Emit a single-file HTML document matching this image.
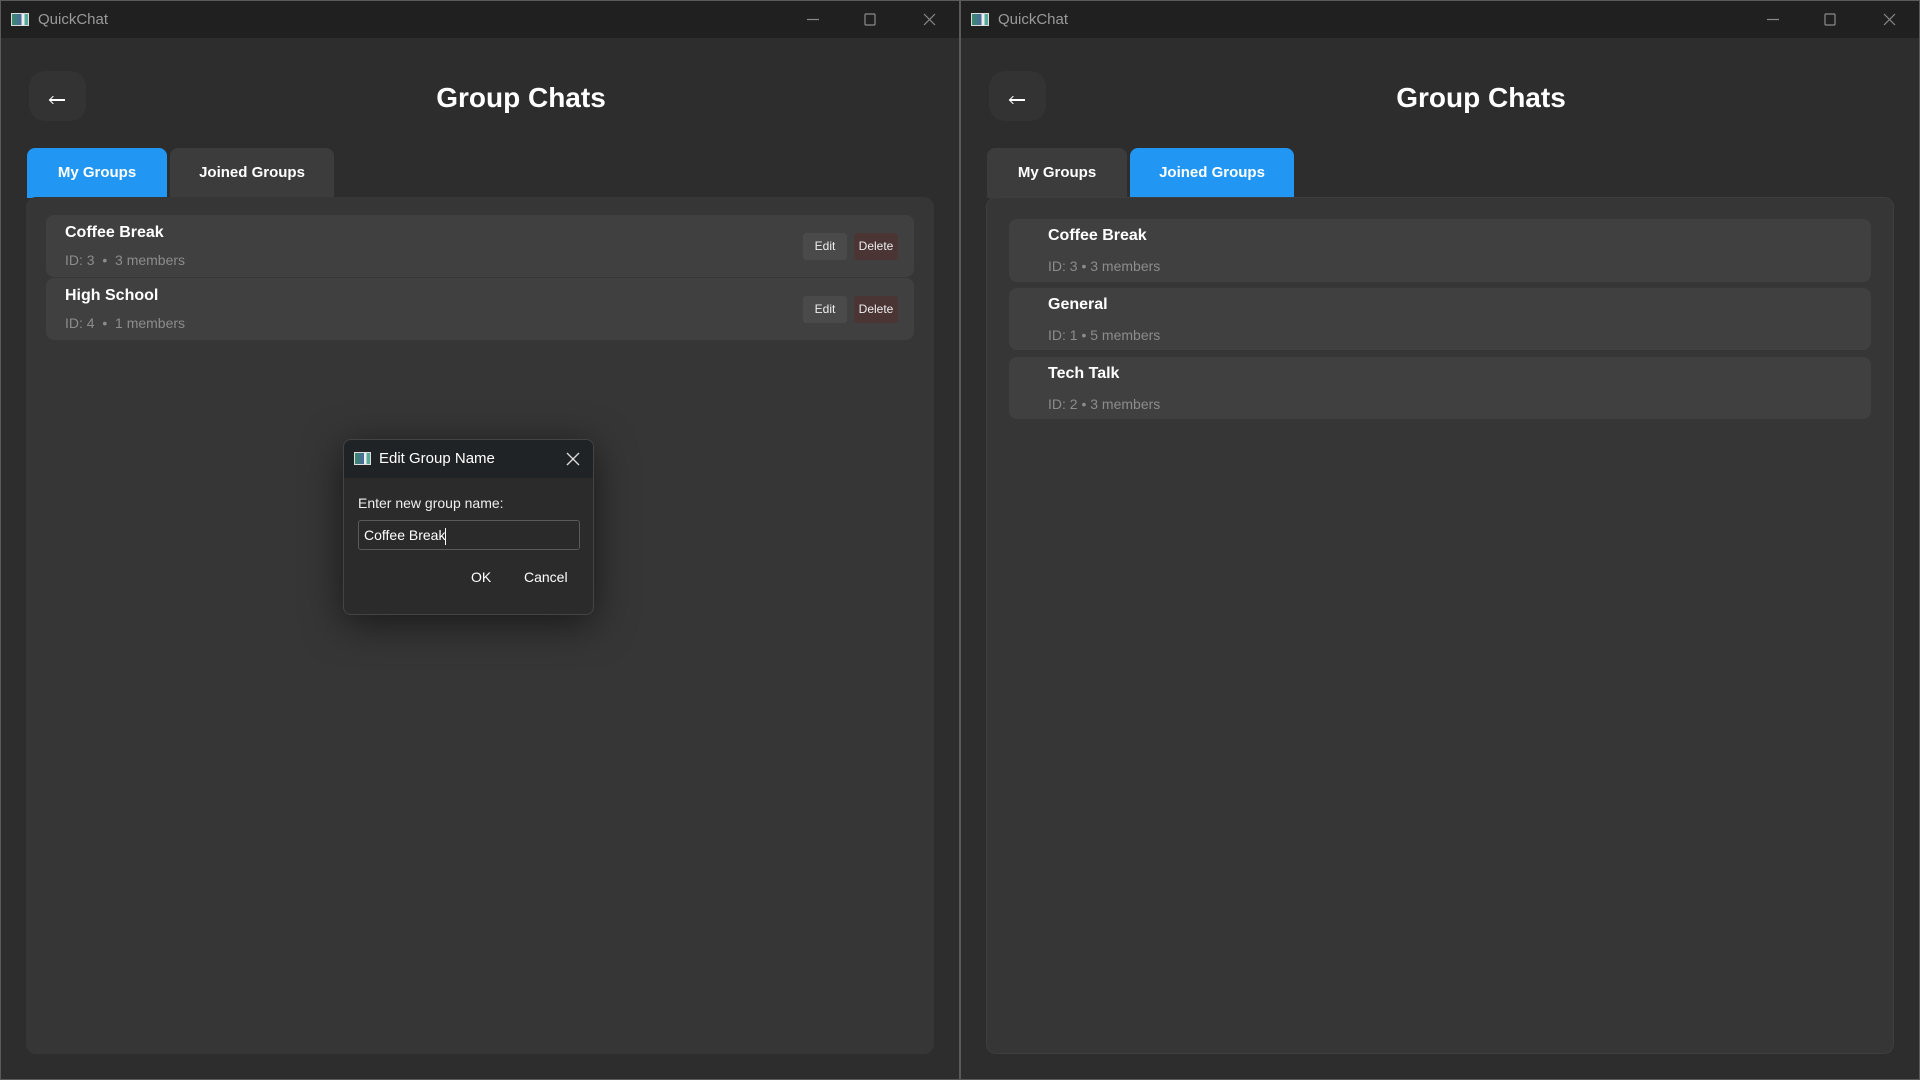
<!DOCTYPE html>
<html><head><meta charset="utf-8"><style>
*{box-sizing:border-box;margin:0;padding:0}
body{width:1920px;height:1080px;background:#2c2c2c;font-family:"Liberation Sans",sans-serif;position:relative;overflow:hidden;color:#fff}
.win{position:absolute;top:0;width:960px;height:1080px;background:#2d2d2d;border:1px solid #5a5a5a;overflow:hidden}
.tb{position:absolute;left:0;top:0;width:100%;height:37px;background:#202020}
.ico{position:absolute;left:10px;top:12px;width:18px;height:13px;background:linear-gradient(90deg,#3a8a6a,#4a6aa0 60%,#eee 60%,#eee 78%,#5a9 78%);border:1px solid #ddd}
.tt{position:absolute;left:37px;top:10px;font-size:15px;color:#9a9a9a}
.ctl{position:absolute;top:0;height:37px;color:#8a8a8a}
.back{position:absolute;left:28px;top:70px;width:57px;height:50px;border-radius:16px;background:#333}
.back:after{content:"";position:absolute;left:21px;top:28px;width:15px;height:1.5px;background:#fff}
.back:before{content:"";position:absolute;left:21px;top:25.5px;width:5px;height:5px;border-left:1.5px solid #fff;border-bottom:1.5px solid #fff;transform:rotate(45deg)}
h1{position:absolute;top:81px;font-size:28px;font-weight:bold;width:300px;text-align:center}
.tab{position:absolute;top:147px;height:50px;border-radius:8px 8px 0 0;background:#3c3c3c;font-weight:bold;font-size:15px;text-align:center;line-height:50px}
.tab.on{background:#2196f3}
.panel{position:absolute;left:25px;top:196px;width:908px;height:857px;background:#363636;border-radius:10px}
.card{position:absolute;background:#404040;border-radius:8px}
.card b{position:absolute;font-size:16px;font-weight:bold}
.card span{position:absolute;font-size:14px;color:#8c8c8c}
.btn{position:absolute;top:18px;width:44px;height:27px;border-radius:3px;font-size:12px;line-height:27px;text-align:center;color:#eee}
</style></head><body>

<div class="win" style="left:0">
<div class="tb"><div class="ico"></div><div class="tt">QuickChat</div>
<svg class="ctl" style="left:800px" width="150" height="37"><g stroke="#8a8a8a" stroke-width="1.2" fill="none"><line x1="6" y1="18.5" x2="18" y2="18.5"/><rect x="64" y="13" width="10" height="11" rx="1"/><path d="M123 13l11 11M134 13l-11 11"/></g></svg></div>
<div class="back"></div>
<h1 style="left:370px">Group Chats</h1>
<div class="tab on" style="left:26px;width:140px">My Groups</div>
<div class="tab" style="left:169px;width:164px">Joined Groups</div>
<div class="panel"></div>
<div class="card" style="left:45px;top:214px;width:868px;height:62px"><b style="left:19px;top:9px">Coffee Break</b><span style="left:19px;top:37px">ID: 3 &nbsp;•&nbsp; 3 members</span><div class="btn" style="left:757px;background:#4a4a4a">Edit</div><div class="btn" style="left:808px;background:#4a3434">Delete</div></div>
<div class="card" style="left:45px;top:277px;width:868px;height:62px"><b style="left:19px;top:9px">High School</b><span style="left:19px;top:37px">ID: 4 &nbsp;•&nbsp; 1 members</span><div class="btn" style="left:757px;background:#4a4a4a">Edit</div><div class="btn" style="left:808px;background:#4a3434">Delete</div></div>

<div style="position:absolute;left:342px;top:438px;width:251px;height:176px;border-radius:8px;background:#2b2b2b;border:1px solid #444;box-shadow:0 8px 40px rgba(0,0,0,.55);overflow:hidden">
<div style="height:38px;background:#1f2326;position:relative"><div class="ico" style="left:10px;top:12px;width:17px;height:13px"></div><div style="position:absolute;left:35px;top:10px;font-size:15px">Edit Group Name</div>
<svg style="position:absolute;left:222px;top:12px" width="14" height="14"><path d="M1 1l12 12M13 1L1 13" stroke="#ddd" stroke-width="1.3"/></svg></div>
<div style="position:absolute;left:14px;top:55px;font-size:14px;color:#eee">Enter new group name:</div>
<div style="position:absolute;left:14px;top:80px;width:222px;height:30px;border:1px solid #5a5a5a;border-radius:3px;background:#2a2a2a;font-size:14px;padding:6px 5px;color:#fff">Coffee Break<span style="display:inline-block;width:1px;height:17px;background:#fff;vertical-align:middle"></span></div>
<div style="position:absolute;left:127px;top:129px;font-size:14px">OK</div>
<div style="position:absolute;left:180px;top:129px;font-size:14px">Cancel</div>
</div>
</div>

<div class="win" style="left:960px">
<div class="tb"><div class="ico"></div><div class="tt">QuickChat</div>
<svg class="ctl" style="left:800px" width="150" height="37"><g stroke="#8a8a8a" stroke-width="1.2" fill="none"><line x1="6" y1="18.5" x2="18" y2="18.5"/><rect x="64" y="13" width="10" height="11" rx="1"/><path d="M123 13l11 11M134 13l-11 11"/></g></svg></div>
<div class="back"></div>
<h1 style="left:370px">Group Chats</h1>
<div class="tab" style="left:26px;width:140px">My Groups</div>
<div class="tab on" style="left:169px;width:164px">Joined Groups</div>
<div class="panel" style="border:1px solid #3e3e3e"></div>
<div class="card" style="left:48px;top:218px;width:862px;height:63px"><b style="left:39px;top:8px">Coffee Break</b><span style="left:39px;top:39px">ID: 3 • 3 members</span></div>
<div class="card" style="left:48px;top:287px;width:862px;height:62px"><b style="left:39px;top:8px">General</b><span style="left:39px;top:39px">ID: 1 • 5 members</span></div>
<div class="card" style="left:48px;top:356px;width:862px;height:62px"><b style="left:39px;top:8px">Tech Talk</b><span style="left:39px;top:39px">ID: 2 • 3 members</span></div>
</div>
</body></html>
